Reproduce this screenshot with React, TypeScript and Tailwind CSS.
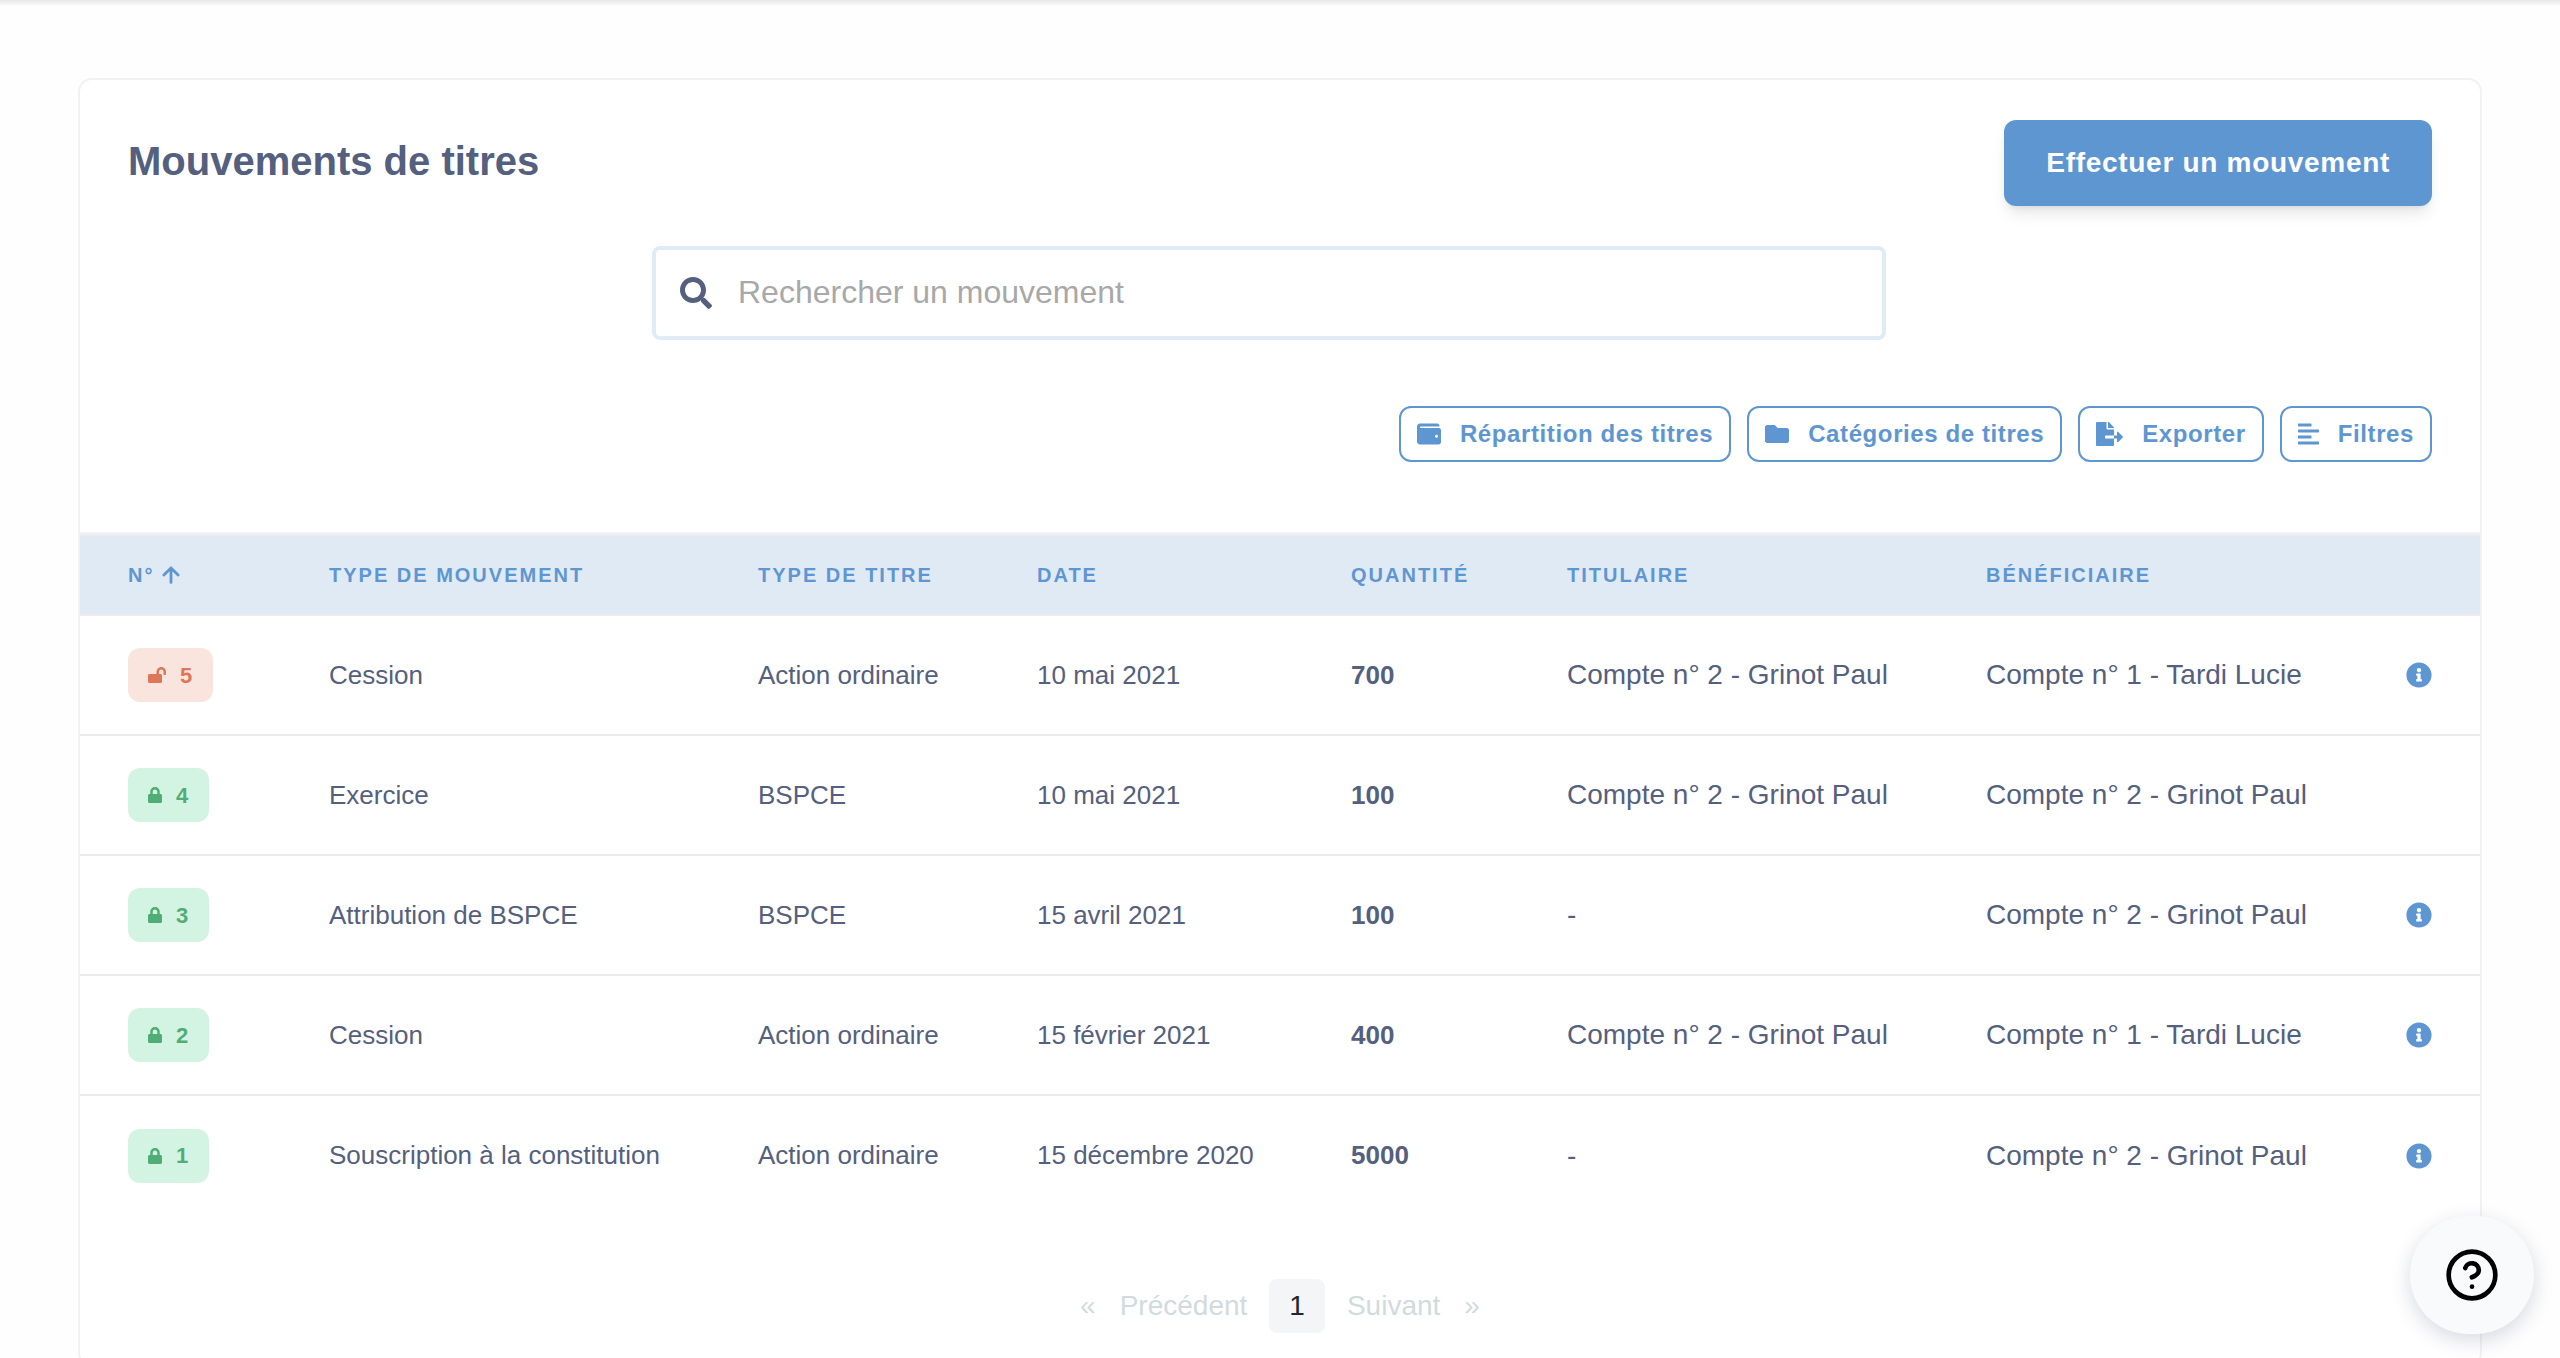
import { HelpCircle } from "lucide-react";
import type { ReactNode } from "react";
import {
  FaAlignLeft,
  FaFileExport,
  FaFolder,
  FaInfoCircle,
  FaLock,
  FaLockOpen,
  FaSearch,
  FaWallet,
} from "react-icons/fa";

type Movement = {
  id: number;
  locked: boolean;
  type: string;
  security: string;
  date: string;
  quantity: number;
  holder: string;
  beneficiary: string;
  info: boolean;
};

const movements: Movement[] = [
  {
    id: 5,
    locked: false,
    type: "Cession",
    security: "Action ordinaire",
    date: "10 mai 2021",
    quantity: 700,
    holder: "Compte n° 2 - Grinot Paul",
    beneficiary: "Compte n° 1 - Tardi Lucie",
    info: true,
  },
  {
    id: 4,
    locked: true,
    type: "Exercice",
    security: "BSPCE",
    date: "10 mai 2021",
    quantity: 100,
    holder: "Compte n° 2 - Grinot Paul",
    beneficiary: "Compte n° 2 - Grinot Paul",
    info: false,
  },
  {
    id: 3,
    locked: true,
    type: "Attribution de BSPCE",
    security: "BSPCE",
    date: "15 avril 2021",
    quantity: 100,
    holder: "-",
    beneficiary: "Compte n° 2 - Grinot Paul",
    info: true,
  },
  {
    id: 2,
    locked: true,
    type: "Cession",
    security: "Action ordinaire",
    date: "15 février 2021",
    quantity: 400,
    holder: "Compte n° 2 - Grinot Paul",
    beneficiary: "Compte n° 1 - Tardi Lucie",
    info: true,
  },
  {
    id: 1,
    locked: true,
    type: "Souscription à la constitution",
    security: "Action ordinaire",
    date: "15 décembre 2020",
    quantity: 5000,
    holder: "-",
    beneficiary: "Compte n° 2 - Grinot Paul",
    info: true,
  },
];

const columns = [
  { label: "Type de mouvement", width: "w-[429px]" },
  { label: "Type de titre", width: "w-[279px]" },
  { label: "Date", width: "w-[314px]" },
  { label: "Quantité", width: "w-[216px]" },
  { label: "Titulaire", width: "w-[419px]" },
  { label: "Bénéficiaire", width: "" },
];

function SortArrow() {
  return (
    <svg
      viewBox="0 0 18 18"
      className="size-[18px]"
      fill="none"
      stroke="currentColor"
      strokeWidth="2.8"
      strokeLinecap="round"
      strokeLinejoin="round"
      aria-hidden="true"
    >
      <path d="M9 16.4V2M1.9 9L9 2L16.1 9" />
    </svg>
  );
}

function ToolbarButton({ icon, children }: { icon: ReactNode; children: ReactNode }) {
  return (
    <button
      type="button"
      className="flex h-14 items-center gap-[19px] rounded-xl border-2 border-[#5e96d2] px-4 text-2xl font-bold tracking-wide whitespace-nowrap text-[#5e96d2]"
    >
      {icon}
      {children}
    </button>
  );
}

function NumberBadge({ id, locked }: { id: number; locked: boolean }) {
  return (
    <span
      className={`inline-flex h-[54px] items-center gap-3.5 rounded-xl px-5 align-middle text-[22px] font-bold tracking-wide ${
        locked ? "bg-[#d3f4e2] text-[#50ad76]" : "bg-[#fae5de] text-[#dd7757]"
      }`}
    >
      {locked ? (
        <FaLock className="h-4 w-[14px]" />
      ) : (
        <FaLockOpen className="h-4 w-[18px]" />
      )}
      {id}
    </span>
  );
}

function MovementRow({ movement }: { movement: Movement }) {
  return (
    <tr className="h-[120px] border-t-2 border-[#ebebf0] text-[26px]">
      <td className="px-12">
        <NumberBadge id={movement.id} locked={movement.locked} />
      </td>
      <td className="px-12">{movement.type}</td>
      <td className="px-12">{movement.security}</td>
      <td className="px-12">{movement.date}</td>
      <td className="px-12 font-bold">{movement.quantity}</td>
      <td className="px-12 text-[28px]">{movement.holder}</td>
      <td className="px-12 text-[28px]">{movement.beneficiary}</td>
      <td className="px-12">
        {movement.info && (
          <button
            type="button"
            aria-label={`Détails du mouvement ${movement.id}`}
            className="block text-[#5e96d2]"
          >
            <FaInfoCircle className="size-[26px]" />
          </button>
        )}
      </td>
    </tr>
  );
}

function MovementsTable() {
  return (
    <div className="border-t-2 border-[#f2f2f3]">
      <table className="w-full border-collapse whitespace-nowrap">
        <thead>
          <tr className="h-20 border-t-2 border-[#ebebf0] bg-[#dfeaf5] text-left text-xl tracking-widest text-[#5e96d2] uppercase">
            <th scope="col" aria-sort="ascending" className="w-[201px] px-12">
              <button type="button" className="flex items-center gap-2 tracking-widest uppercase">
                N°
                <SortArrow />
              </button>
            </th>
            {columns.map((column) => (
              <th key={column.label} scope="col" className={`px-12 ${column.width}`}>
                {column.label}
              </th>
            ))}
            <th scope="col" aria-label="Détails" className="w-[122px] px-12" />
          </tr>
        </thead>
        <tbody>
          {movements.map((movement) => (
            <MovementRow key={movement.id} movement={movement} />
          ))}
        </tbody>
      </table>
    </div>
  );
}

function Pagination() {
  return (
    <nav
      aria-label="Pagination"
      className="flex h-[54px] items-stretch justify-center gap-0.5 text-[28px] text-[#d1dbde]"
    >
      <button type="button" disabled className="flex items-center gap-6 px-5">
        <span>«</span>
        Précédent
      </button>
      <button
        type="button"
        aria-current="page"
        className="rounded-lg bg-[#f4f5f7] px-5 text-[#222529]"
      >
        1
      </button>
      <button type="button" disabled className="flex items-center gap-6 px-5">
        Suivant
        <span>»</span>
      </button>
    </nav>
  );
}

export default function App() {
  return (
    <div className="h-screen overflow-hidden bg-[#fefefe] font-['Liberation_Sans',Arial,sans-serif] text-[#54607e]">
      <div className="h-1.5 bg-gradient-to-b from-[#e6e6e6] to-transparent" />

      <main className="px-20 pt-[74px]">
        <section className="rounded-xl bg-white pb-8 ring-2 ring-[#f2f2f3]">
          <div className="px-12 pt-10">
            <div className="flex items-center justify-between">
              <h1 className="pb-1 text-[40px] font-bold">Mouvements de titres</h1>
              <button
                type="button"
                className="h-[86px] rounded-xl bg-[#5e96d2] px-[42px] text-[28px] font-bold tracking-wide text-white shadow-lg"
              >
                Effectuer un mouvement
              </button>
            </div>

            <div className="flex justify-center pt-10 pr-[22px]">
              <label className="flex h-[94px] w-full max-w-[1234px] items-center gap-[26px] rounded-lg border-4 border-[#dfecf7] px-6">
                <FaSearch className="size-8 shrink-0" />
                <input
                  type="search"
                  aria-label="Rechercher un mouvement"
                  placeholder="Rechercher un mouvement"
                  className="w-full bg-transparent pb-0.5 text-[32px] outline-none placeholder:text-[#a8a8a8]"
                />
              </label>
            </div>

            <div className="flex flex-wrap justify-end gap-4 pt-[66px] pb-[70px]">
              <ToolbarButton icon={<FaWallet className="size-6" />}>
                Répartition des titres
              </ToolbarButton>
              <ToolbarButton icon={<FaFolder className="size-6" />}>
                Catégories de titres
              </ToolbarButton>
              <ToolbarButton icon={<FaFileExport className="h-6 w-[27px]" />}>
                Exporter
              </ToolbarButton>
              <ToolbarButton icon={<FaAlignLeft className="h-6 w-[21px]" />}>
                Filtres
              </ToolbarButton>
            </div>
          </div>

          <MovementsTable />

          <div className="pt-16">
            <Pagination />
          </div>
        </section>
      </main>

      <button
        type="button"
        aria-label="Aide"
        className="fixed right-[26px] bottom-6 flex h-[118px] w-[124px] items-center justify-center rounded-full bg-[#f9fafc] text-black shadow-[0_6px_20px_rgba(40,50,90,0.18)]"
      >
        <HelpCircle className="size-14" />
      </button>
    </div>
  );
}
